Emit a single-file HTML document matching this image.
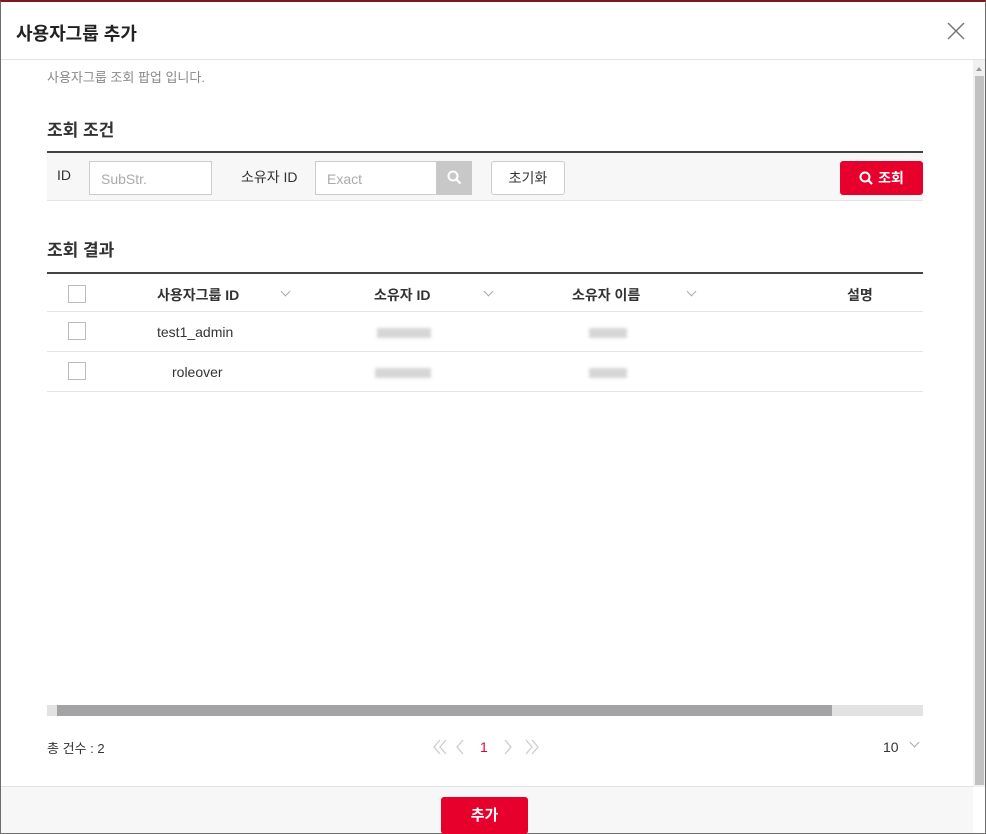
<!DOCTYPE html>
<html><head><meta charset="utf-8"><style>
*{box-sizing:border-box;margin:0;padding:0}
body{width:986px;height:834px;overflow:hidden;background:#fff;font-family:"Liberation Sans","Noto Sans CJK KR",sans-serif;color:#333;position:relative}
.frame{position:absolute;left:0;top:0;width:986px;height:834px;border:1px solid #6d6d6d;border-top:2px solid #6b1a22}
.abs{position:absolute}
.title{left:16px;top:20px;font-size:18px;font-weight:bold;color:#222}
.hdrline{left:1px;top:59px;width:984px;height:1px;background:#e2e2e2}
.desc{left:47px;top:67px;font-size:13px;color:#888}
.h2{left:47px;font-size:17px;font-weight:bold;color:#333}
.search{left:47px;top:151px;width:876px;height:50px;background:#f7f7f7;border-top:2px solid #444;border-bottom:1px solid #e4e4e4}
.lbl{font-size:14px;color:#333}
.inp{height:34px;border:1px solid #ccc;background:#fff;font-size:14px;color:#aaa;padding:9px 11px}
.btn{border:1px solid #ccc;background:#fff;border-radius:3px;font-size:14px;color:#333;text-align:center}
.red{background:#e8002d;color:#fff;border-radius:3px;text-align:center;font-size:14px;font-weight:bold}
.thead{left:47px;top:272px;width:876px;height:40px;border-top:2px solid #444;border-bottom:1px solid #e4e4e4}
.row{left:47px;width:876px;height:40px;border-bottom:1px solid #e4e4e4}
.cb{width:18px;height:18px;border:1px solid #bbb;background:#fff}
.th{font-size:14px;font-weight:bold;color:#333}
.td{font-size:14px;color:#333}
.blur{height:10px;background:#d6d6d6;filter:blur(1.5px)}
.chev{width:7px;height:7px;border-right:1px solid #aaa;border-bottom:1px solid #aaa;transform:rotate(45deg)}
</style></head><body>
<div class="frame"></div>
<div class="abs" style="left:1px;top:0;width:984px;height:2px;background:#7a1a25"></div>
<div class="abs title">사용자그룹 추가</div>
<svg class="abs" style="left:947px;top:22px" width="18" height="18"><path d="M1 1L17 17M17 1L1 17" stroke="#777" stroke-width="1.5"/></svg>
<div class="abs hdrline"></div>
<div class="abs" style="left:973px;top:60px;width:12px;height:727px;background:#f0f0f0"></div>
<div class="abs" style="left:976px;top:67px;width:0;height:0;border-left:3px solid transparent;border-right:3px solid transparent;border-bottom:4px solid #999"></div>
<div class="abs" style="left:975px;top:76px;width:9px;height:709px;background:#c1c1c1"></div>

<div class="abs desc">사용자그룹 조회 팝업 입니다.</div>
<div class="abs h2" style="top:116px">조회 조건</div>
<div class="abs search">
  <div class="abs lbl" style="left:10px;top:14px">ID</div>
  <div class="abs inp" style="left:42px;top:8px;width:123px">SubStr.</div>
  <div class="abs lbl" style="left:194px;top:14px">소유자 ID</div>
  <div class="abs inp" style="left:268px;top:8px;width:122px">Exact</div>
  <div class="abs" style="left:390px;top:8px;width:35px;height:34px;background:#c8c8c8"></div>
  <svg class="abs" style="left:400px;top:17px" width="15" height="15"><circle cx="6" cy="6" r="4.5" stroke="#fff" stroke-width="2" fill="none"/><path d="M9.5 9.5L13.5 13.5" stroke="#fff" stroke-width="2.2"/></svg>
  <div class="abs btn" style="left:444px;top:8px;width:74px;height:34px;line-height:32px">초기화</div>
  <div class="abs red" style="left:793px;top:8px;width:83px;height:34px;line-height:34px"><svg width="14" height="14" style="vertical-align:-2px;margin-right:5px"><circle cx="6" cy="6" r="4.5" stroke="#fff" stroke-width="2" fill="none"/><path d="M9.3 9.3L13 13" stroke="#fff" stroke-width="2.2"/></svg>조회</div>
</div>
<div class="abs h2" style="top:236px">조회 결과</div>
<div class="abs thead">
  <div class="abs cb" style="left:21px;top:11px"></div>
  <div class="abs th" style="left:110px;top:11px">사용자그룹 ID</div>
  <div class="abs chev" style="left:235px;top:14px"></div>
  <div class="abs th" style="left:327px;top:11px">소유자 ID</div>
  <div class="abs chev" style="left:438px;top:14px"></div>
  <div class="abs th" style="left:525px;top:11px">소유자 이름</div>
  <div class="abs chev" style="left:641px;top:14px"></div>
  <div class="abs th" style="left:800px;top:11px">설명</div>
</div>
<div class="abs row" style="top:312px">
  <div class="abs cb" style="left:21px;top:10px"></div>
  <div class="abs td" style="left:110px;top:12px">test1_admin</div>
  <div class="abs blur" style="left:330px;top:16px;width:54px"></div>
  <div class="abs blur" style="left:542px;top:16px;width:38px"></div>
</div>
<div class="abs row" style="top:352px">
  <div class="abs cb" style="left:21px;top:10px"></div>
  <div class="abs td" style="left:125px;top:12px">roleover</div>
  <div class="abs blur" style="left:328px;top:16px;width:56px"></div>
  <div class="abs blur" style="left:542px;top:16px;width:38px"></div>
</div>
<div class="abs" style="left:47px;top:705px;width:876px;height:11px;background:#e2e2e2"></div>
<div class="abs" style="left:57px;top:705px;width:775px;height:11px;background:#a3a3a6"></div>

<div class="abs td" style="left:47px;top:738px;font-size:13px">총 건수 : 2</div>
<svg class="abs" style="left:433px;top:739px" width="110" height="16"><g stroke="#ccc" stroke-width="1.3" fill="none"><path d="M7 1L1 8L7 15M13 1L7 8L13 15"/><path d="M30 1L24 8L30 15"/><path d="M72 1L78 8L72 15"/><path d="M93 1L99 8L93 15M99 1L105 8L99 15"/></g></svg>
<div class="abs" style="left:480px;top:739px;font-size:14px;color:#e8002d">1</div>
<div class="abs td" style="left:883px;top:739px">10</div>
<div class="abs chev" style="left:911px;top:739px"></div>

<div class="abs" style="left:1px;top:786px;width:972px;height:47px;background:#f7f7f7;border-top:1px solid #e2e2e2"></div>
<div class="abs red" style="left:441px;top:797px;width:87px;height:37px;line-height:37px;font-size:15px">추가</div>
</body></html>
